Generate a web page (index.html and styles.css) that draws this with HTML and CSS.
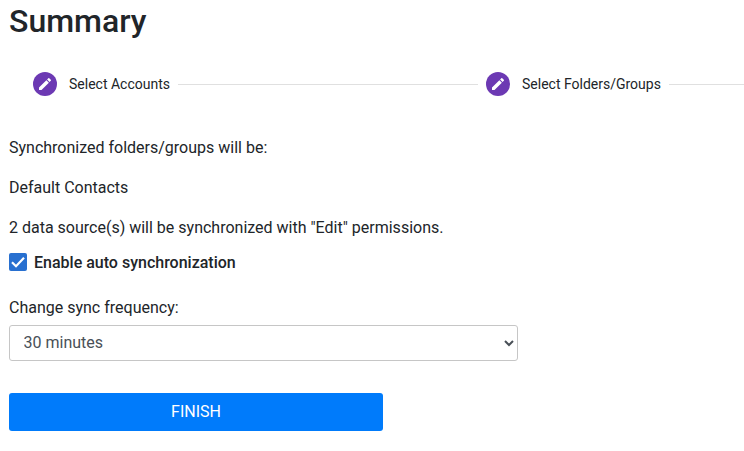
FILE: index.html
```
<!DOCTYPE html>
<html lang="en">
<head>
    <meta charset="UTF-8">
    <meta name="viewport" content="width=device-width, initial-scale=1.0">
    <title>Summary</title>
    <link rel="stylesheet" href="styles.css">
</head>
<body>
    <div class="container">
        <h1>Summary</h1>
        <div class="stepper">
            <div class="step">
                <span class="step-icon">
                    <svg viewBox="0 0 24 24"><path d="M3 17.25V21h3.75L17.81 9.94l-3.75-3.75L3 17.25zM20.71 7.04a1 1 0 0 0 0-1.41l-2.34-2.34a1 1 0 0 0-1.41 0l-1.83 1.83 3.75 3.75 1.83-1.83z"/></svg>
                </span>
                <span class="step-label">Select Accounts</span>
            </div>
            <div class="step-line"></div>
            <div class="step">
                <span class="step-icon">
                    <svg viewBox="0 0 24 24"><path d="M3 17.25V21h3.75L17.81 9.94l-3.75-3.75L3 17.25zM20.71 7.04a1 1 0 0 0 0-1.41l-2.34-2.34a1 1 0 0 0-1.41 0l-1.83 1.83 3.75 3.75 1.83-1.83z"/></svg>
                </span>
                <span class="step-label">Select Folders/Groups</span>
            </div>
            <div class="step-line last"></div>
        </div>
        <form class="summary">
            <p>Synchronized folders/groups will be:</p>
            <p>Default Contacts</p>
            <p>2 data source(s) will be synchronized with "Edit" permissions.</p>
            <label class="auto-sync">
                <input type="checkbox" checked>
                <span class="checkbox">
                    <svg viewBox="0 0 18 18"><path d="M3 9.2l4 4 8-8.4"/></svg>
                </span>
                Enable auto synchronization
            </label>
            <label class="frequency-label" for="frequency">Change sync frequency:</label>
            <select id="frequency">
                <option>30 minutes</option>
            </select>
            <button type="button">FINISH</button>
        </form>
    </div>
</body>
</html>
```
FILE: styles.css
```
* {
    margin: 0;
    padding: 0;
    box-sizing: border-box;
}
body {
    font-family: Roboto, "Liberation Sans", sans-serif;
    font-size: 16px;
    line-height: 24px;
    color: #212529;
    background-color: white;
}
.container {
    padding: 1px 0 0 9px;
}
h1 {
    font-size: 32px;
    font-weight: 500;
    line-height: 40px;
}
.stepper {
    display: flex;
    align-items: center;
    height: 24px;
    margin-top: 31px;
    padding-left: 24px;
    font-size: 14px;
}
.step {
    display: flex;
    align-items: center;
    flex-shrink: 0;
}
.step-icon {
    display: flex;
    align-items: center;
    justify-content: center;
    width: 24px;
    height: 24px;
    margin-right: 12px;
    border-radius: 50%;
    background-color: #6c39b3;
}
.step-icon svg {
    width: 16px;
    height: 16px;
    fill: white;
}
.step-line {
    flex: 0 0 300px;
    height: 1px;
    margin: 0 8px;
    background-color: #e0e0e0;
}
.step-line.last {
    flex: 1;
    margin-right: 0;
}
.summary {
    padding-top: 40px;
}
p {
    margin-bottom: 16px;
}
.auto-sync {
    display: flex;
    align-items: center;
    margin-top: -5px;
    font-weight: 500;
}
.auto-sync input {
    display: none;
}
.checkbox {
    width: 18px;
    height: 18px;
    margin: 0 7px 2px 0;
    border-radius: 2px;
    background-color: #2870d0;
}
.checkbox svg {
    display: block;
    fill: none;
    stroke: white;
    stroke-width: 2.2;
}
.frequency-label {
    display: block;
    margin-top: 21px;
}
select {
    display: block;
    width: 509px;
    height: 36px;
    margin-top: 5px;
    padding: 0 11px 2px 9.5px;
    border: 1px solid #c6c6c6;
    border-radius: 3px;
    font: inherit;
    color: #495057;
    background-color: white;
}
button {
    display: block;
    width: 374px;
    height: 38px;
    margin-top: 32px;
    border: none;
    border-radius: 3px;
    font: inherit;
    color: white;
    background-color: #007bfb;
    cursor: pointer;
}
```
